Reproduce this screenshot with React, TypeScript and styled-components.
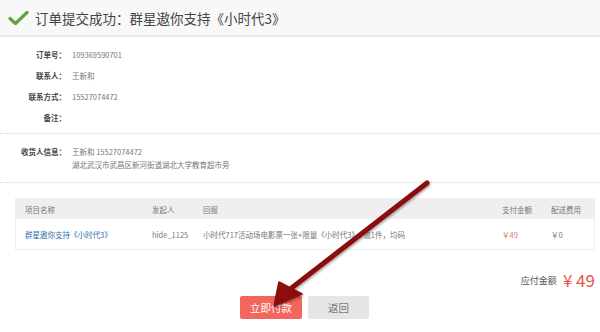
import React from 'react';
import styled, { createGlobalStyle } from 'styled-components';

const GlobalStyle = createGlobalStyle`
  html, body {
    margin: 0;
    padding: 0;
    background: #fff;
  }
  body {
    font-family: "Noto Sans CJK SC", "Noto Sans", sans-serif;
    color: #333;
  }
`;

const SPage = styled.div`
  position: relative;
  width: 600px;
  height: 332px;
  overflow: hidden;
`;

const SHeader = styled.div`
  display: flex;
  align-items: center;
  gap: 5px;
  height: 35px;
  padding-left: 8px;
  background: #f8f8f8;
  border-bottom: 2px solid #ececec;
  font-size: 13.5px;
  color: #444;
`;

const SSection = styled.div<{ $top: number; $bottom: number }>`
  display: grid;
  grid-template-columns: 66px 1fr;
  column-gap: 6px;
  padding: ${(p) => p.$top}px 0 ${(p) => p.$bottom}px;
  border-bottom: 1px dotted #d6d6d6;
  font-size: 7.5px;
`;

const SLabel = styled.div<{ $h: number }>`
  height: ${(p) => p.$h}px;
  line-height: ${(p) => p.$h}px;
  text-align: right;
  font-weight: bold;
  color: #444;
`;

const SValue = styled.div<{ $h: number }>`
  min-height: ${(p) => p.$h}px;
  line-height: ${(p) => p.$h}px;
  color: #777;
`;

const STable = styled.div`
  margin: 15px 5px 0 15px;
  border: 1px solid #eeeeee;
  font-size: 7.5px;
`;

const SRow = styled.div<{ $head?: boolean }>`
  display: grid;
  grid-template-columns: 127px 51px 299px 49px 1fr;
  align-items: center;
  height: ${(p) => (p.$head ? 20 : 30)}px;
  padding-left: 9px;
  background: ${(p) => (p.$head ? '#efefef' : '#fff')};
  color: #777;
`;

const SLink = styled.span`
  color: #2f6fb0;
`;

const SPrice = styled.span`
  color: #e9706a;
`;

const STotal = styled.div`
  display: flex;
  justify-content: flex-end;
  align-items: center;
  gap: 6px;
  height: 20px;
  margin: 20px 5px 0 0;
`;

const STotalLabel = styled.span`
  font-size: 9px;
  color: #555;
`;

const STotalValue = styled.span`
  font-size: 17px;
  color: #e8574e;
  line-height: 20px;
`;

const SActions = styled.div`
  display: flex;
  gap: 6px;
  margin-top: 6px;
  padding-left: 240px;
`;

const SButton = styled.button<{ $primary?: boolean }>`
  width: ${(p) => (p.$primary ? 62 : 61)}px;
  height: 23px;
  border: none;
  border-radius: 2px;
  padding: 0;
  font-family: inherit;
  font-size: 10.5px;
  background: ${(p) => (p.$primary ? '#f2665d' : '#e6e6e6')};
  color: ${(p) => (p.$primary ? '#fff' : '#777')};
`;

const SArrow = styled.svg`
  position: absolute;
  left: 0;
  top: 0;
  pointer-events: none;
`;

const info = [
  ['订单号：', '109369590701'],
  ['联系人：', '王新和'],
  ['联系方式：', '15527074472'],
  ['备注：', ''],
];

const App = () => {
  return (
    <SPage>
      <GlobalStyle />
      <SHeader>
        <svg width="22" height="16" viewBox="0 0 22 16">
          <path d="M2 8.5 L7.5 13.5 L19 2.5" fill="none" stroke="#5ea63a" strokeWidth="3.2" strokeLinecap="round" strokeLinejoin="round" />
        </svg>
        <span>订单提交成功：群星遨你支持《小时代3》</span>
      </SHeader>

      <SSection $top={7} $bottom={5}>
        {info.map(([label, value]) => (
          <React.Fragment key={label}>
            <SLabel $h={21}>{label}</SLabel>
            <SValue $h={21}>{value}</SValue>
          </React.Fragment>
        ))}
      </SSection>

      <SSection $top={11} $bottom={11}>
        <SLabel $h={13}>收货人信息：</SLabel>
        <SValue $h={13}>
          王新和 15527074472
          <br />
          湖北武汉市武昌区新河街道湖北大学教育超市旁
        </SValue>
      </SSection>

      <STable>
        <SRow $head>
          <span>项目名称</span>
          <span>发起人</span>
          <span>回报</span>
          <span>支付金额</span>
          <span>配送费用</span>
        </SRow>
        <SRow>
          <SLink>群星遨你支持《小时代3》</SLink>
          <span>hide_1125</span>
          <span>小时代717活动场电影票一张+限量《小时代3》T恤1件，均码</span>
          <SPrice>￥49</SPrice>
          <span>￥0</span>
        </SRow>
      </STable>

      <STotal>
        <STotalLabel>应付金额</STotalLabel>
        <STotalValue>¥ 49</STotalValue>
      </STotal>

      <SActions>
        <SButton $primary>立即付款</SButton>
        <SButton>返回</SButton>
      </SActions>

      <SArrow width="600" height="332" viewBox="0 0 600 332">
        <defs>
          <filter id="shadow" x="-20%" y="-20%" width="140%" height="140%">
            <feDropShadow dx="1" dy="1.5" stdDeviation="1.2" floodColor="#000" floodOpacity="0.35" />
          </filter>
        </defs>
        <g filter="url(#shadow)" fill="#8c0c0c" stroke="#8c0c0c">
          <line x1="427" y1="183" x2="289" y2="290" strokeWidth="5" strokeLinecap="round" />
          <polygon points="274,306 279,282 302,294" strokeWidth="1.5" strokeLinejoin="round" />
        </g>
      </SArrow>
    </SPage>
  );
};

export default App;
